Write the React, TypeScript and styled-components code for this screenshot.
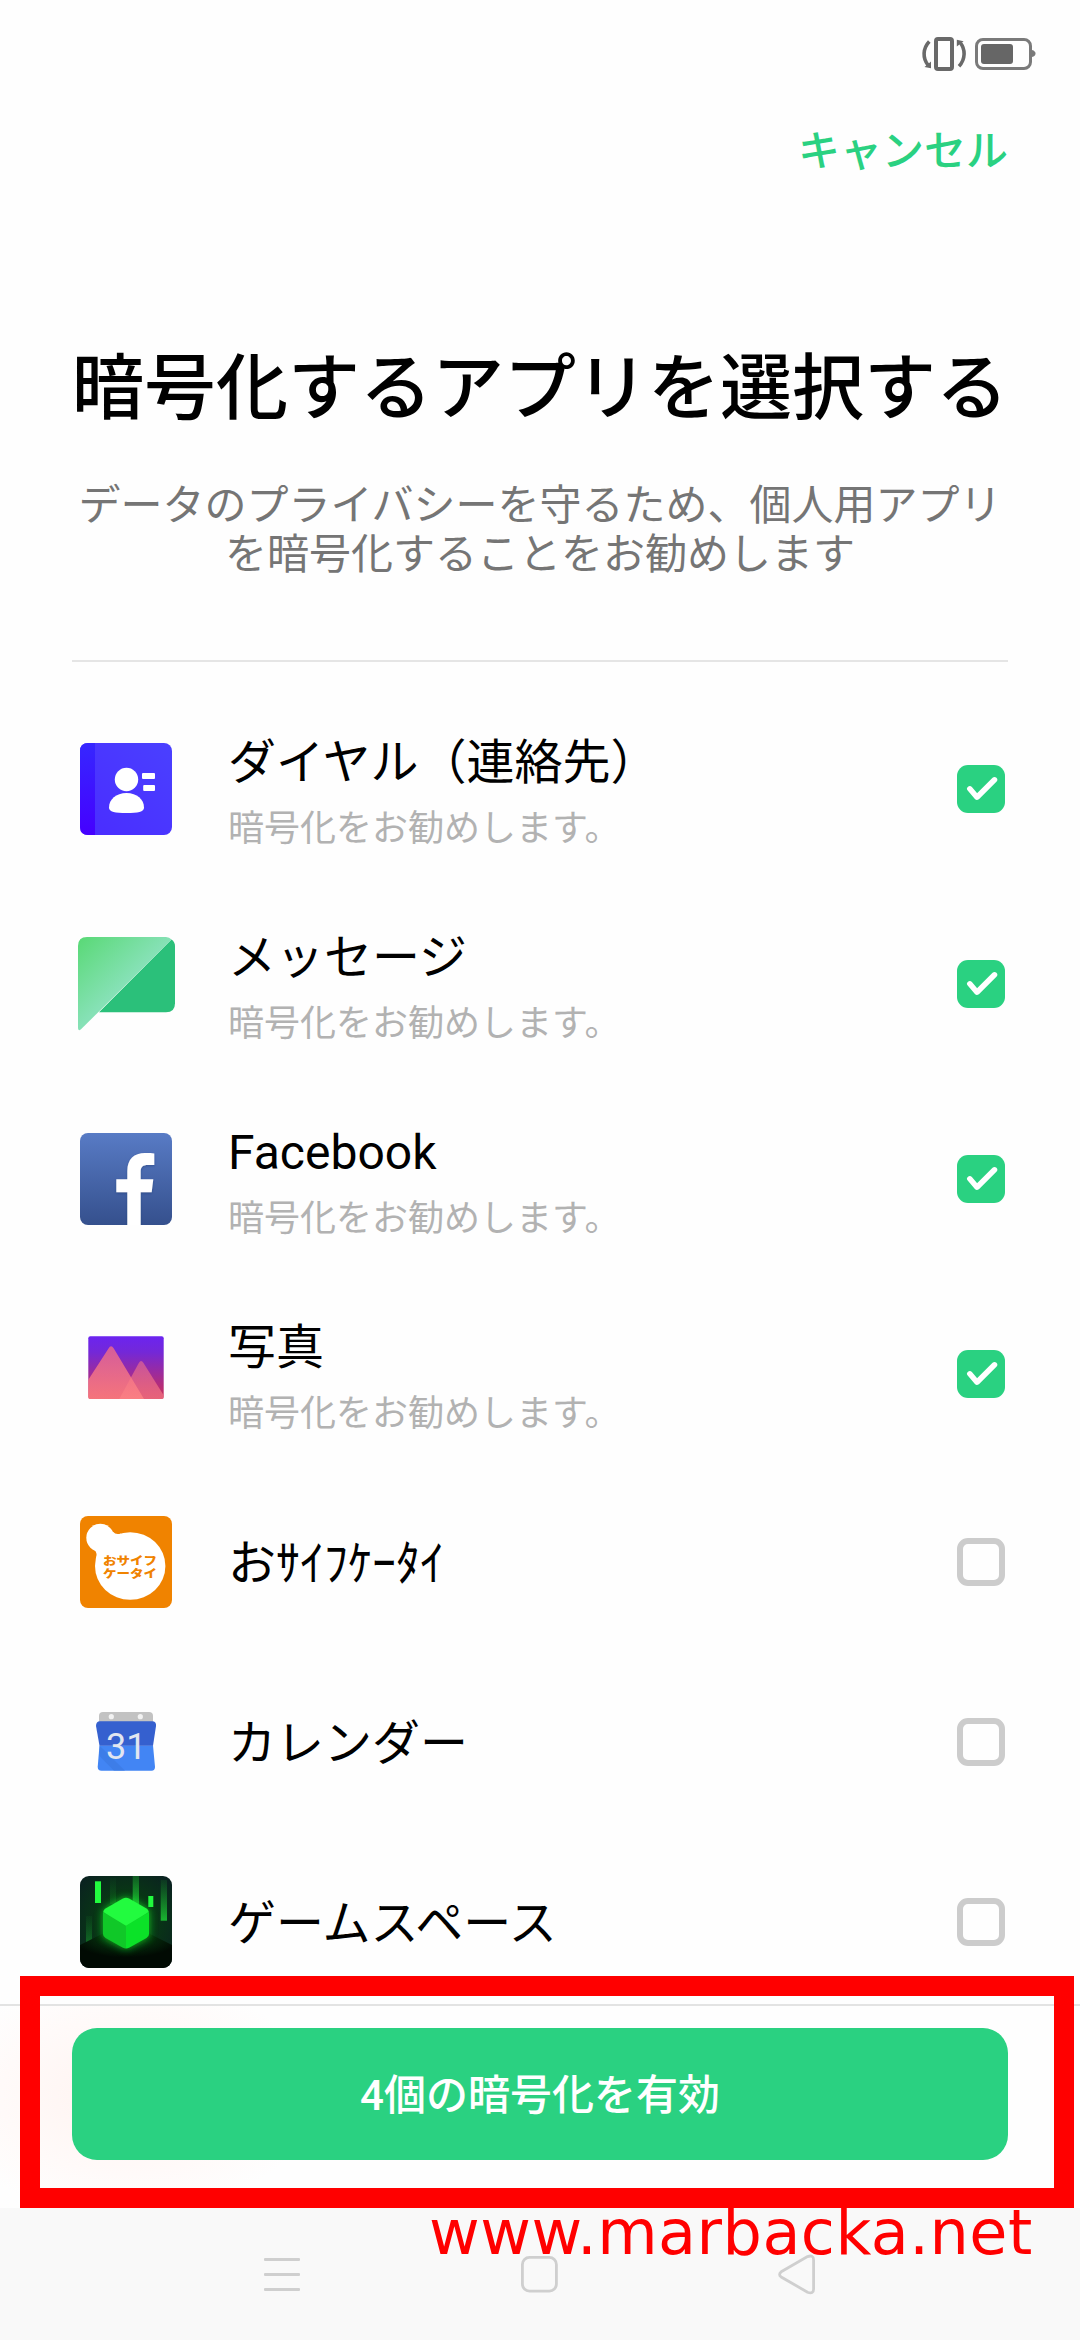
import React, { useState } from "react";
import styled, { createGlobalStyle } from "styled-components";

const GREEN = "#2ad181";

const GlobalStyle = createGlobalStyle`
  * { box-sizing: border-box; }
  html, body { margin: 0; padding: 0; background: #fefefe; }
`;

const Screen = styled.div`
  position: relative;
  display: flex;
  flex-direction: column;
  width: 1080px;
  height: 2340px;
  overflow: hidden;
  background: #fefefe;
  color: #000;
  font-family: Roboto, "Noto Sans CJK JP", sans-serif;
`;

const StatusBar = styled.div`
  display: flex;
  flex: none;
  justify-content: flex-end;
  align-items: center;
  gap: 9px;
  height: 108px;
  padding: 0 44px 0 0;
`;

const TopBar = styled.div`
  display: flex;
  flex: none;
  justify-content: flex-end;
  height: 84px;
  padding: 4px 72px 0 0;
`;

const CancelButton = styled.button`
  border: 0;
  padding: 0;
  background: none;
  color: ${GREEN};
  font: inherit;
  font-size: 42px;
  font-weight: 500;
  line-height: 60px;
`;

const Header = styled.header`
  display: flex;
  flex: none;
  flex-direction: column;
  align-items: center;
  height: 470px;
  margin: 0 72px;
  padding-top: 145px;
  border-bottom: 2px solid #e5e5e5;
  text-align: center;
`;

const Title = styled.h1`
  margin: 0;
  font-size: 72px;
  font-weight: 500;
  line-height: 104px;
  white-space: nowrap;
`;

const Description = styled.p`
  margin: 40px 0 0;
  color: #757575;
  font-size: 42px;
  line-height: 49px;
  white-space: nowrap;
`;

const List = styled.ul`
  flex: 1;
  min-height: 0;
  margin: 0;
  padding: 29px 75px 0 80px;
  overflow: hidden;
  list-style: none;
`;

const Row = styled.li<{ $tall: boolean }>`
  display: flex;
  align-items: center;
  height: ${(p) => (p.$tall ? 195 : 180)}px;
  padding: ${(p) => (p.$tall ? "52px 0 51px" : "45px 0 43px")};
`;

const AppIcon = styled.svg`
  flex: none;
  width: 92px;
  height: 92px;
  overflow: visible;
`;

const Labels = styled.div<{ $tall: boolean }>`
  display: flex;
  flex: 1;
  flex-direction: column;
  padding: ${(p) => (p.$tall ? 9 : 4)}px 0 0 56px;
`;

const AppName = styled.span`
  font-size: 48px;
  line-height: 70px;
  white-space: nowrap;
`;

const Hint = styled.span`
  margin-top: 1px;
  color: #b2b2b2;
  font-size: 36px;
  line-height: 60px;
`;

const CheckBox = styled.button<{ $on: boolean }>`
  display: flex;
  flex: none;
  width: 48px;
  height: 48px;
  padding: 0;
  border: ${(p) => (p.$on ? "0" : "6px solid #cccccc")};
  border-radius: 11px;
  background: ${(p) => (p.$on ? GREEN : "transparent")};
`;

const Footer = styled.footer`
  flex: none;
  height: 204px;
  padding: 22px 72px 0;
  border-top: 2px solid #e3e3e3;
  background: radial-gradient(ellipse 190px 120px at 125px 90px, #fff3f0 0%, #fffaf9 65%, #fefefe 100%);
`;

const PrimaryButton = styled.button`
  display: block;
  width: 100%;
  height: 132px;
  padding: 4px 0 0;
  border: 0;
  border-radius: 25px;
  background: ${GREEN};
  color: #fff;
  font: inherit;
  font-size: 42px;
  font-weight: 500;
  line-height: 60px;
`;

const NavBar = styled.nav`
  display: flex;
  flex: none;
  justify-content: space-between;
  height: 132px;
  padding: 44px 264px 0;
  background: #f9f9f9;
`;

const Highlight = styled.div`
  position: absolute;
  left: 20px;
  top: 1976px;
  width: 1054px;
  height: 232px;
  border: 20px solid #ff0000;
  pointer-events: none;
`;

const Watermark = styled.div`
  position: absolute;
  left: 429px;
  top: 2196px;
  color: #ff0000;
  font-family: Verdana, "DejaVu Sans", sans-serif;
  font-size: 62px;
  letter-spacing: 0.5px;
  line-height: 74px;
  white-space: nowrap;
`;

const VibrateIcon = () => (
  <svg width="44" height="36" viewBox="922 36 44 36" fill="none" stroke="#696969">
    <rect x="936" y="39" width="16" height="30" rx="2" strokeWidth="4" />
    <path d="M929.3 41.5C922.6 48.5 922.6 58.5 928 65" strokeWidth="3.6" />
    <path d="M924.5 67L931 61.5V68.3Z" fill="#696969" stroke="none" />
    <path d="M959 66.3C965.5 59.5 965.5 49.5 960.5 43" strokeWidth="3.6" />
    <path d="M956.8 46.5V39.8L963.6 41.2Z" fill="#696969" stroke="none" />
  </svg>
);

const BatteryIcon = () => (
  <svg width="61" height="34" viewBox="975 37 61 34">
    <rect x="976.5" y="39.5" width="54" height="29" rx="6.5" fill="none" stroke="#7a7a7a" strokeWidth="3" />
    <rect x="981" y="44" width="32" height="20" rx="3" fill="#666" />
    <path d="M1032 50Q1035.5 51 1035.5 53.5T1032 57Z" fill="#7a7a7a" />
  </svg>
);

const ContactsIcon = () => (
  <AppIcon viewBox="0 0 92 92">
    <defs>
      <linearGradient id="spine" x1="0" y1="0" x2="0" y2="1">
        <stop offset="0" stopColor="#3627ff" />
        <stop offset="1" stopColor="#4500ff" />
      </linearGradient>
      <linearGradient id="cover" x1="0" y1="1" x2="1" y2="0">
        <stop offset="0" stopColor="#4a2cff" />
        <stop offset="1" stopColor="#4a40ff" />
      </linearGradient>
    </defs>
    <rect width="92" height="92" rx="8" fill="url(#cover)" />
    <path d="M15 0H8Q0 0 0 8V84Q0 92 8 92H15Z" fill="url(#spine)" />
    <circle cx="46.5" cy="36.5" r="11.7" fill="#fff" />
    <path d="M46.5 50C57 50 64 56.5 64 64.5C64 69 58 70 46.5 70S29 69 29 64.5C29 56.5 36 50 46.5 50Z" fill="#fff" />
    <rect x="62" y="30" width="13" height="6" rx="1" fill="#fff" />
    <rect x="63.2" y="42" width="11.8" height="6" rx="1" fill="#fff" />
  </AppIcon>
);

const MessagesIcon = () => (
  <AppIcon viewBox="0 0 92 92">
    <defs>
      <linearGradient id="bubble" x1="0" y1="0" x2="44" y2="46" gradientUnits="userSpaceOnUse">
        <stop offset="0" stopColor="#5ad977" />
        <stop offset="1" stopColor="#86e1b6" />
      </linearGradient>
    </defs>
    <path d="M19 74.3H86Q95 74.3 95 65.3V8Q95 4 91.5 1.5Z" fill="#2bc07a" />
    <path d="M7 -1H86Q89.5 -1 91.5 1.5L1 91.3Q-2 93.5 -2 90V8Q-2 -1 7 -1Z" fill="url(#bubble)" />
  </AppIcon>
);

const FacebookIcon = () => (
  <AppIcon viewBox="0 0 92 92">
    <defs>
      <linearGradient id="fb" x1="0" y1="0" x2="0" y2="1">
        <stop offset="0" stopColor="#587bc5" />
        <stop offset="1" stopColor="#35508d" />
      </linearGradient>
      <filter id="fbShadow" x="-20%" y="-10%" width="140%" height="120%">
        <feDropShadow dx="0" dy="1" stdDeviation="1" floodColor="#1d3263" floodOpacity="0.4" />
      </filter>
      <clipPath id="fbClip"><rect width="92" height="92" rx="8" /></clipPath>
    </defs>
    <rect width="92" height="92" rx="8" fill="url(#fb)" />
    <g clipPath="url(#fbClip)">
      <path
        filter="url(#fbShadow)"
        fill="#fff"
        d="M47.3 92V59.3H36.3V46.3H47.3V38C47.3 26 54 20 65 20C69 20 72 20 74.3 20.5V32H68C63 32 60.7 34 60.7 38.5V46.3H73.3L71.7 59.3H60.7V92Z"
      />
    </g>
  </AppIcon>
);

const PhotosIcon = () => (
  <AppIcon viewBox="0 0 92 92">
    <defs>
      <linearGradient id="sky" x1="0" y1="0" x2="0" y2="1">
        <stop offset="0" stopColor="#6b24f0" />
        <stop offset="0.25" stopColor="#7328d8" />
        <stop offset="1" stopColor="#d02f50" />
      </linearGradient>
      <linearGradient id="peak" x1="0" y1="0" x2="0" y2="1">
        <stop offset="0" stopColor="#f06a88" stopOpacity="0.8" />
        <stop offset="1" stopColor="#ff8585" stopOpacity="0.8" />
      </linearGradient>
      <linearGradient id="peakBack" x1="0" y1="0" x2="0" y2="1">
        <stop offset="0" stopColor="#f0708c" stopOpacity="0.6" />
        <stop offset="1" stopColor="#f07585" stopOpacity="0.75" />
      </linearGradient>
      <clipPath id="photoClip"><rect x="8.3" y="8.3" width="75.4" height="62.7" rx="2" /></clipPath>
    </defs>
    <g clipPath="url(#photoClip)">
      <rect x="8" y="8" width="76" height="64" fill="url(#sky)" />
      <path d="M58.8 35Q61 31 63.5 35L86 71H39.3Z" fill="url(#peakBack)" />
      <path d="M28.5 20.5Q31 16 33.8 20.5L64 71H-4Z" fill="url(#peak)" />
    </g>
  </AppIcon>
);

const LogoText = styled.text`
  fill: #f08300;
  font-family: "Noto Sans CJK JP", sans-serif;
  font-size: 11.5px;
  font-weight: 900;
`;

const WalletIcon = () => (
  <AppIcon viewBox="0 0 92 92">
    <rect width="92" height="92" rx="8" fill="#f08300" />
    <ellipse cx="50.2" cy="50" rx="35.2" ry="33.8" fill="#fff" />
    <circle cx="20.3" cy="21.8" r="14" fill="#fff" />
    <path d="M33.3 16Q35.5 19 41 17.5L30 40L15.8 43Q17.8 37 14.5 34Z" fill="#fff" />
    <LogoText x="23" y="49" textLength="54" lengthAdjust="spacingAndGlyphs">おサイフ</LogoText>
    <LogoText x="23" y="62" textLength="54" lengthAdjust="spacingAndGlyphs">ケータイ</LogoText>
  </AppIcon>
);

const DateText = styled.text`
  fill: #e2e6f0;
  font-family: Roboto, sans-serif;
  font-size: 36px;
  font-weight: 400;
  text-anchor: middle;
`;

const CalendarIcon = () => (
  <AppIcon viewBox="0 0 92 92">
    <path d="M19 27V20Q19 16 23 16H69Q73 16 73 20V27Z" fill="#c2c2c2" />
    <circle cx="31.3" cy="20.7" r="2.6" fill="#f2f2f2" />
    <circle cx="60.3" cy="20.7" r="2.6" fill="#f2f2f2" />
    <path d="M19.5 49.5H73L75 71Q75 74.7 71.5 74.7H21.5Q17.7 74.7 17.7 71Z" fill="#4285f4" />
    <path d="M20 25.3H72Q76.5 25.3 76 30L73 49.7H19.5L16 30Q16 25.3 20 25.3Z" fill="#3560cf" />
    <path d="M23 53L45 74.7H34L19.5 60V50Z" fill="#3b78e0" opacity="0.6" />
    <DateText x="46.3" y="63.1">31</DateText>
  </AppIcon>
);

const GameIcon = () => (
  <AppIcon viewBox="0 0 92 92">
    <defs>
      <radialGradient id="room" cx="0.5" cy="0.5" r="0.65">
        <stop offset="0" stopColor="#087a18" />
        <stop offset="0.45" stopColor="#083814" />
        <stop offset="1" stopColor="#0a2220" />
      </radialGradient>
      <radialGradient id="floor" cx="0.5" cy="0.1" r="0.6">
        <stop offset="0" stopColor="#07500f" />
        <stop offset="0.6" stopColor="#04230a" />
        <stop offset="1" stopColor="#010a03" />
      </radialGradient>
      <linearGradient id="beam" x1="0" y1="0" x2="0" y2="1">
        <stop offset="0" stopColor="#1aa32f" stopOpacity="0.15" />
        <stop offset="1" stopColor="#1ccc35" stopOpacity="0.85" />
      </linearGradient>
      <filter id="glow" x="-40%" y="-40%" width="180%" height="180%">
        <feGaussianBlur stdDeviation="4" />
      </filter>
      <clipPath id="gameClip"><rect width="92" height="92" rx="9" /></clipPath>
    </defs>
    <g clipPath="url(#gameClip)">
      <rect width="92" height="92" fill="url(#room)" />
      <rect x="52.7" y="-12" width="6.3" height="40" fill="url(#beam)" />
      <rect x="80.7" y="4" width="6.3" height="40.7" fill="url(#beam)" />
      <rect x="6" y="40" width="6" height="27" fill="url(#beam)" opacity="0.45" />
      <rect x="30" y="2" width="6" height="26" fill="url(#beam)" opacity="0.25" />
      <path d="M0 69L24 57H68L92 69V92H0Z" fill="url(#floor)" />
      <rect x="15" y="5.3" width="6" height="21.7" fill="#22fb3f" />
      <rect x="68.3" y="20" width="5" height="11" fill="#22fb3f" />
      <path d="M46 21L69 34V61L46 73L23 61V34Z" fill="#14e62c" filter="url(#glow)" opacity="0.75" />
    </g>
    <path d="M23 36L46 49.7V72.5Q44.5 72.5 42.5 71.5L25.5 62Q23 60.5 23 58Z" fill="#10c828" />
    <path d="M69 36L46 49.7V72.5Q47.5 72.5 49.5 71.5L66.5 62Q69 60.5 69 58Z" fill="#0be228" />
    <path d="M42.5 22.7Q46 21 49.5 22.7L66.5 32.5Q68.6 33.8 68.8 36L46 49.7L23.2 36Q23.4 33.8 25.5 32.5Z" fill="#22fb3f" />
  </AppIcon>
);

const CheckMark = () => (
  <svg width="48" height="48" viewBox="0 0 48 48" fill="none" stroke="#fff" strokeWidth="5.5" strokeLinecap="round" strokeLinejoin="round">
    <path d="M12.8 23.8L20 32.2L37.5 14.8" />
  </svg>
);

interface Entry {
  name: string;
  Icon: () => React.ReactElement;
  recommended: boolean;
}

const entries: Entry[] = [
  { name: "ダイヤル（連絡先）", Icon: ContactsIcon, recommended: true },
  { name: "メッセージ", Icon: MessagesIcon, recommended: true },
  { name: "Facebook", Icon: FacebookIcon, recommended: true },
  { name: "写真", Icon: PhotosIcon, recommended: true },
  { name: "おｻｲﾌｹｰﾀｲ", Icon: WalletIcon, recommended: false },
  { name: "カレンダー", Icon: CalendarIcon, recommended: false },
  { name: "ゲームスペース", Icon: GameIcon, recommended: false },
];

export default function App() {
  const [selected, setSelected] = useState(entries.map((e) => e.recommended));
  const toggle = (index: number) => setSelected((s) => s.map((v, i) => (i === index ? !v : v)));
  const count = selected.filter(Boolean).length;

  return (
    <Screen lang="ja">
      <GlobalStyle />
      <StatusBar>
        <VibrateIcon />
        <BatteryIcon />
      </StatusBar>
      <TopBar>
        <CancelButton>キャンセル</CancelButton>
      </TopBar>
      <Header>
        <Title>暗号化するアプリを選択する</Title>
        <Description>
          データのプライバシーを守るため、個人用アプリ
          <br />
          を暗号化することをお勧めします
        </Description>
      </Header>
      <List>
        {entries.map(({ name, Icon, recommended }, i) => (
          <Row key={name} $tall={recommended}>
            <Icon />
            <Labels $tall={recommended}>
              <AppName>{name}</AppName>
              {recommended && <Hint>暗号化をお勧めします。</Hint>}
            </Labels>
            <CheckBox $on={selected[i]} onClick={() => toggle(i)} aria-label={name}>
              {selected[i] && <CheckMark />}
            </CheckBox>
          </Row>
        ))}
      </List>
      <Footer>
        <PrimaryButton>{count}個の暗号化を有効</PrimaryButton>
      </Footer>
      <NavBar>
        <svg width="36" height="44" viewBox="0 -4 36 44" fill="#cfcfcf">
          <rect y="2" width="36" height="3" rx="1" />
          <rect y="17" width="36" height="3" rx="1" />
          <rect y="32" width="36" height="3" rx="1" />
        </svg>
        <svg width="37" height="44" viewBox="0 -4 37 44" fill="none" stroke="#cfcfcf" strokeWidth="2.8">
          <rect x="1.4" y="1.4" width="34" height="33.7" rx="7" />
        </svg>
        <svg width="38" height="44" viewBox="0 -4 38 44" fill="none" stroke="#cfcfcf" strokeWidth="2.8">
          <path d="M3.2 15.8L29.5 0.6Q35.6 -1.5 35.6 4V33Q35.6 38.5 29.5 36.2L3.2 21Q0 18.4 3.2 15.8Z" />
        </svg>
      </NavBar>
      <Highlight />
      <Watermark>www.marbacka.net</Watermark>
    </Screen>
  );
}
